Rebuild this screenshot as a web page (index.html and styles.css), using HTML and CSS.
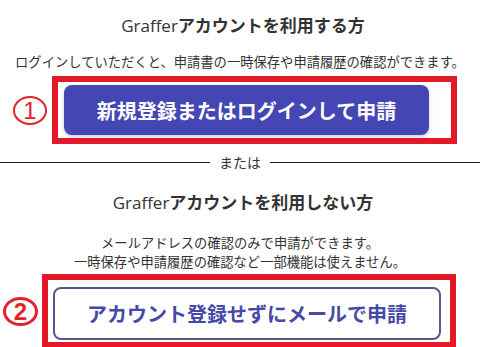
FILE: index.html
```html
<!DOCTYPE html>
<html lang="ja">
<head>
    <meta charset="UTF-8">
    <meta name="viewport" content="width=device-width, initial-scale=1.0">
    <title>申請方法の選択</title>
    <link rel="stylesheet" href="styles.css">
</head>
<body>
    <div class="page">
        <h2 class="titulo"><span class="marca">Graffer</span>アカウントを利用する方</h2>
        <p class="texto">ログインしていただくと、申請書の一時保存や申請履歴の確認ができます。</p>
        <div class="linha linha-um">
            <span class="numero">1</span>
            <div class="destaque destaque-um">
                <button class="botao botao-cheio">新規登録またはログインして申請</button>
            </div>
        </div>

        <div class="divisor"><span>または</span></div>

        <h2 class="titulo titulo-dois"><span class="marca">Graffer</span>アカウントを利用しない方</h2>
        <p class="texto texto-dois">メールアドレスの確認のみで申請ができます。<br>一時保存や申請履歴の確認など一部機能は使えません。</p>
        <div class="linha linha-dois">
            <span class="numero numero-dois">2</span>
            <div class="destaque destaque-dois">
                <button class="botao botao-borda">アカウント登録せずにメールで申請</button>
            </div>
        </div>
    </div>
</body>
</html>
```

FILE: styles.css
```css
body {
    margin: 0;
    background-color: #fff;
    font-family: "Noto Sans CJK JP", "Noto Sans", sans-serif;
    color: #333;
}
.page {
    width: 480px;
    padding-top: 13px;
}
.titulo {
    margin: 0;
    font-size: 17px;
    line-height: 24px;
    font-weight: bold;
    text-align: center;
    padding-left: 6px;
}
.marca {
    font-family: "Open Sans", sans-serif;
    font-weight: 500;
}
.texto {
    margin: 14px 0 0;
    font-size: 13.3px;
    line-height: 20px;
    text-align: center;
}
.linha {
    display: flex;
    align-items: center;
    margin-top: 4px;
}
.linha-um {
    padding-left: 13px;
}
.linha-dois {
    padding-left: 3px;
    margin-top: 3px;
}
.numero {
    box-sizing: border-box;
    width: 34px;
    height: 29px;
    border: 2px solid #e3232a;
    border-radius: 50%;
    color: #e3232a;
    font-family: "Liberation Sans", sans-serif;
    font-size: 24px;
    line-height: 25px;
    text-align: center;
    margin-right: 5px;
}
.numero-dois {
    width: 35px;
    height: 29px;
    border-width: 3px;
    font-weight: bold;
    margin-right: 4px;
    line-height: 23px;
}
.destaque {
    border: 6px solid #e3192a;
}
.destaque-um {
    width: 379px;
    padding: 3px 8px 3px 6px;
    box-sizing: content-box;
}
.destaque-dois {
    width: 395px;
    padding: 7px 2px 2px 5px;
}
.botao {
    display: block;
    font-family: "Noto Sans CJK JP", sans-serif;
    font-size: 20px;
    font-weight: bold;
    border-radius: 8px;
    cursor: pointer;
}
.botao-cheio {
    width: 365px;
    height: 50px;
    background-color: #4447b3;
    color: #fff;
    border: 0;
    box-shadow: 0 2px 4px rgba(60, 60, 140, 0.25);
}
.botao-borda {
    width: 388px;
    height: 53px;
    background-color: #fff;
    color: #4649a6;
    border: 2px solid #55578f;
}
.divisor {
    display: flex;
    align-items: center;
    margin-top: 7px;
    font-size: 14px;
    line-height: 22px;
}
.divisor::before,
.divisor::after {
    content: "";
    flex: 1;
    border-top: 1px solid #222;
}
.divisor span {
    padding: 0 9px;
}
.titulo-dois {
    margin-top: 17px;
}
.texto-dois {
    margin-top: 18px;
    line-height: 19px;
}
```
